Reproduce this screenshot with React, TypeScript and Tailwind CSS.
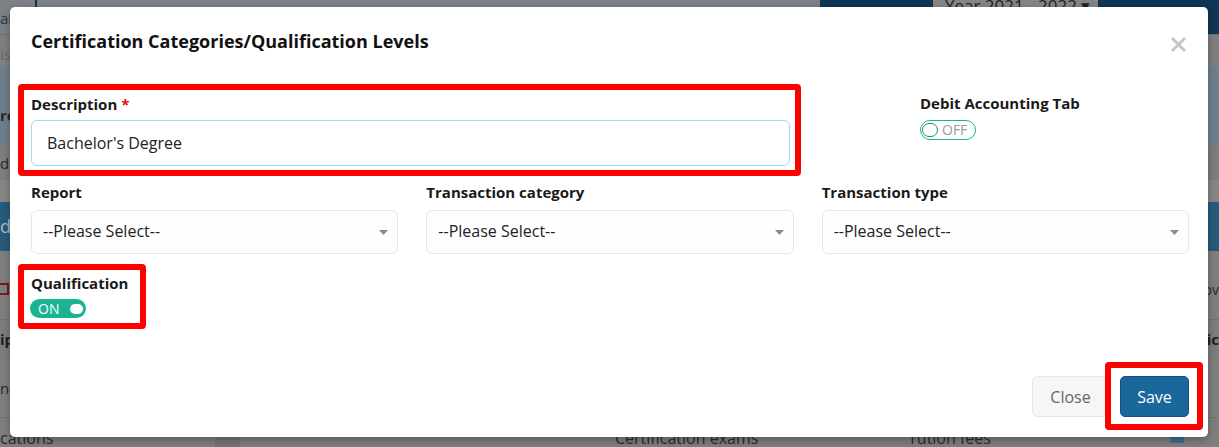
import React from "react";

function Caret() {
  return (
    <svg width="9" height="5" viewBox="0 0 9 5">
      <path d="M0 0h9L4.5 5z" fill="#8a8a8a" />
    </svg>
  );
}

function SelectBox() {
  return (
    <div className="flex h-[44px] items-center justify-between rounded-[6px] border border-[#e8e8e8] bg-[#fefefe] pl-[11px] pr-[9px] text-[16px] text-[#222]">
      <span className="pb-[3px]">--Please Select--</span>
      <Caret />
    </div>
  );
}

function RedBox({ className }: { className: string }) {
  return (
    <div
      className={
        "pointer-events-none absolute rounded-[4px] border-[6px] border-[#ff0000] " +
        className
      }
    />
  );
}

export default function App() {
  return (
    <div className="relative h-[447px] w-[1219px] overflow-hidden bg-[#808080] font-['Open_Sans',sans-serif]">
      {/* dimmed background page */}
      <div className="flex flex-col text-[15px]">
        <div className="flex h-[34px]">
          <div className="flex w-[820px] items-start bg-[#7d8288] pl-[0px]">
            <span className="mt-[8px] leading-[20px] text-[#2b3a48]">ai</span>
            <span className="ml-[23px] h-[10px] w-[2px] bg-[#12324b]" />
          </div>
          <div className="flex flex-1 items-start bg-[#0f3654]">
            <div className="ml-[113px] flex h-[30px] w-[165px] items-start bg-[#858585] pl-[12px]">
              <span className="-mt-[6px] text-[17px] leading-[24px] text-[#222]">Year 2021 - 2022 ▾</span>
            </div>
          </div>
        </div>
        <div className="h-[1px] bg-[#737373]" />
        <div className="flex h-[31px] items-center justify-between bg-[#808080]">
          <span className="pt-[8px] text-[#5d6b78]">is</span>
        </div>
        <div className="flex h-[80px] items-center justify-between bg-[#6f808d]">
          <span className="pt-[18px] font-bold text-[#2a2a2a]">re</span>
        </div>
        <div className="flex h-[34px] items-center bg-[#7e7e7e]">
          <span className="text-[#2a2a2a]">de</span>
        </div>
        <div className="h-[22px] bg-[#868686]" />
        <div className="flex h-[49px] items-center justify-between bg-[#285a7c]">
          <span className="text-[18px] text-[#a9bccb]">d</span>
        </div>
        <div className="flex h-[68px] items-center justify-between bg-[#7f7f7f]">
          <span className="ml-[-3px] mt-[8px] h-[12px] w-[12px] border-2 border-[#7a1a1a]" />
          <span className="mt-[8px] text-[14px] text-[#2a2a2a]">ov</span>
        </div>
        <div className="flex h-[40px] items-center justify-between border-t border-[#727272] bg-[#7d7d7d]">
          <span className="font-bold text-[#1e1e1e]">ip</span>
          <span className="font-bold text-[#1e1e1e]">ic</span>
        </div>
        <div className="flex h-[58px] items-center bg-[#7f7f7f]">
          <span className="text-[#2a2a2a]">nc</span>
        </div>
        <div className="flex h-[30px] items-start border-t border-[#727272] bg-[#7f7f7f] text-[16px] text-[#2a2a2a]">
          <span className="mt-[9px] w-[215px] leading-[22px]">cations</span>
          <span className="h-full w-[25px] bg-[#747474]" />
          <span className="ml-[375px] mt-[9px] w-[293px] leading-[22px]">Certification exams</span>
          <span className="mt-[9px] w-[262px] leading-[22px]">Tution fees</span>
          <span className="mt-[11px] h-[14px] w-[14px] bg-[#436d92]" />
        </div>
      </div>

      {/* modal */}
      <div className="absolute left-[10px] top-[7px] flex h-[430px] w-[1198px] flex-col rounded-[5px] bg-white pb-[20px] pl-[21px] pr-[19px] pt-[21px] shadow-[0_3px_9px_rgba(0,0,0,0.3)]">
        <div className="flex h-[26px] items-center justify-between">
          <h2 className="text-[18px] font-bold leading-[26px] text-[#111]">
            Certification Categories/Qualification Levels
          </h2>
          <svg width="17" height="17" viewBox="0 0 17 17" className="mr-[2px] mt-[6px]">
            <path d="M2 2L15 15M15 2L2 15" stroke="#c6c6c6" strokeWidth="3" />
          </svg>
        </div>

        <div className="mt-[39px] flex">
          <div className="relative w-[759px]">
            <RedBox className="-bottom-[10px] -left-[13px] -right-[11px] -top-[9px]" />
            <div className="text-[15px] font-bold leading-[22px] text-[#1a1a1a]">
              Description <span className="text-[#e01010]">*</span>
            </div>
            <div className="mt-[5px] flex h-[46px] items-center rounded-[6px] border border-[#a9d7ee] pl-[15px] text-[16px] text-[#222]">
              Bachelor's Degree
            </div>
          </div>
          <div className="-mt-[1px] ml-[130px]">
            <div className="text-[15px] font-bold leading-[22px] text-[#1a1a1a]">
              Debit Accounting Tab
            </div>
            <div className="mt-[6px] flex h-[20px] w-[56px] items-center rounded-full border-[1.5px] border-[#1ab394] bg-white pl-[1px]">
              <span className="h-[14px] w-[16px] rounded-full border-[1.5px] border-[#1a8f78]" />
              <span className="ml-[4px] text-[14px] leading-none text-[#9a9a9a]">OFF</span>
            </div>
          </div>
        </div>

        <div className="mt-[15px] grid grid-cols-3 gap-x-[28px]">
          <div>
            <div className="text-[15px] font-bold leading-[22px] text-[#1a1a1a]">Report</div>
            <div className="mt-[7px]">
              <SelectBox />
            </div>
          </div>
          <div>
            <div className="text-[15px] font-bold leading-[22px] text-[#1a1a1a]">Transaction category</div>
            <div className="mt-[7px]">
              <SelectBox />
            </div>
          </div>
          <div>
            <div className="text-[15px] font-bold leading-[22px] text-[#1a1a1a]">Transaction type</div>
            <div className="mt-[7px]">
              <SelectBox />
            </div>
          </div>
        </div>

        <div className="relative mt-[18px] w-fit">
          <RedBox className="-left-[13px] -top-[8px] h-[65px] w-[128px]" />
          <div className="text-[15px] font-bold leading-[22px] text-[#1a1a1a]">Qualification</div>
          <div className="-ml-[1px] mt-[5px] flex h-[19px] w-[56px] items-center justify-between rounded-full bg-[#1ab394] pl-[8px] pr-[3px]">
            <span className="text-[14px] leading-none text-white">ON</span>
            <span className="h-[10px] w-[13px] rounded-full bg-white" />
          </div>
        </div>

        <div className="mt-auto flex justify-end gap-[11px]">
          <button className="flex h-[41px] w-[77px] items-center justify-center rounded-[5px] border border-[#e6e6e6] bg-[#f6f6f6] text-[16px] text-[#666]">
            Close
          </button>
          <div className="relative">
            <RedBox className="-left-[15px] -top-[14px] h-[68px] w-[98px]" />
            <button className="flex h-[41px] w-[69px] items-center justify-center rounded-[5px] border border-[#13507e] bg-[#1a679b] text-[16px] text-white">
              Save
            </button>
          </div>
        </div>
      </div>
    </div>
  );
}
